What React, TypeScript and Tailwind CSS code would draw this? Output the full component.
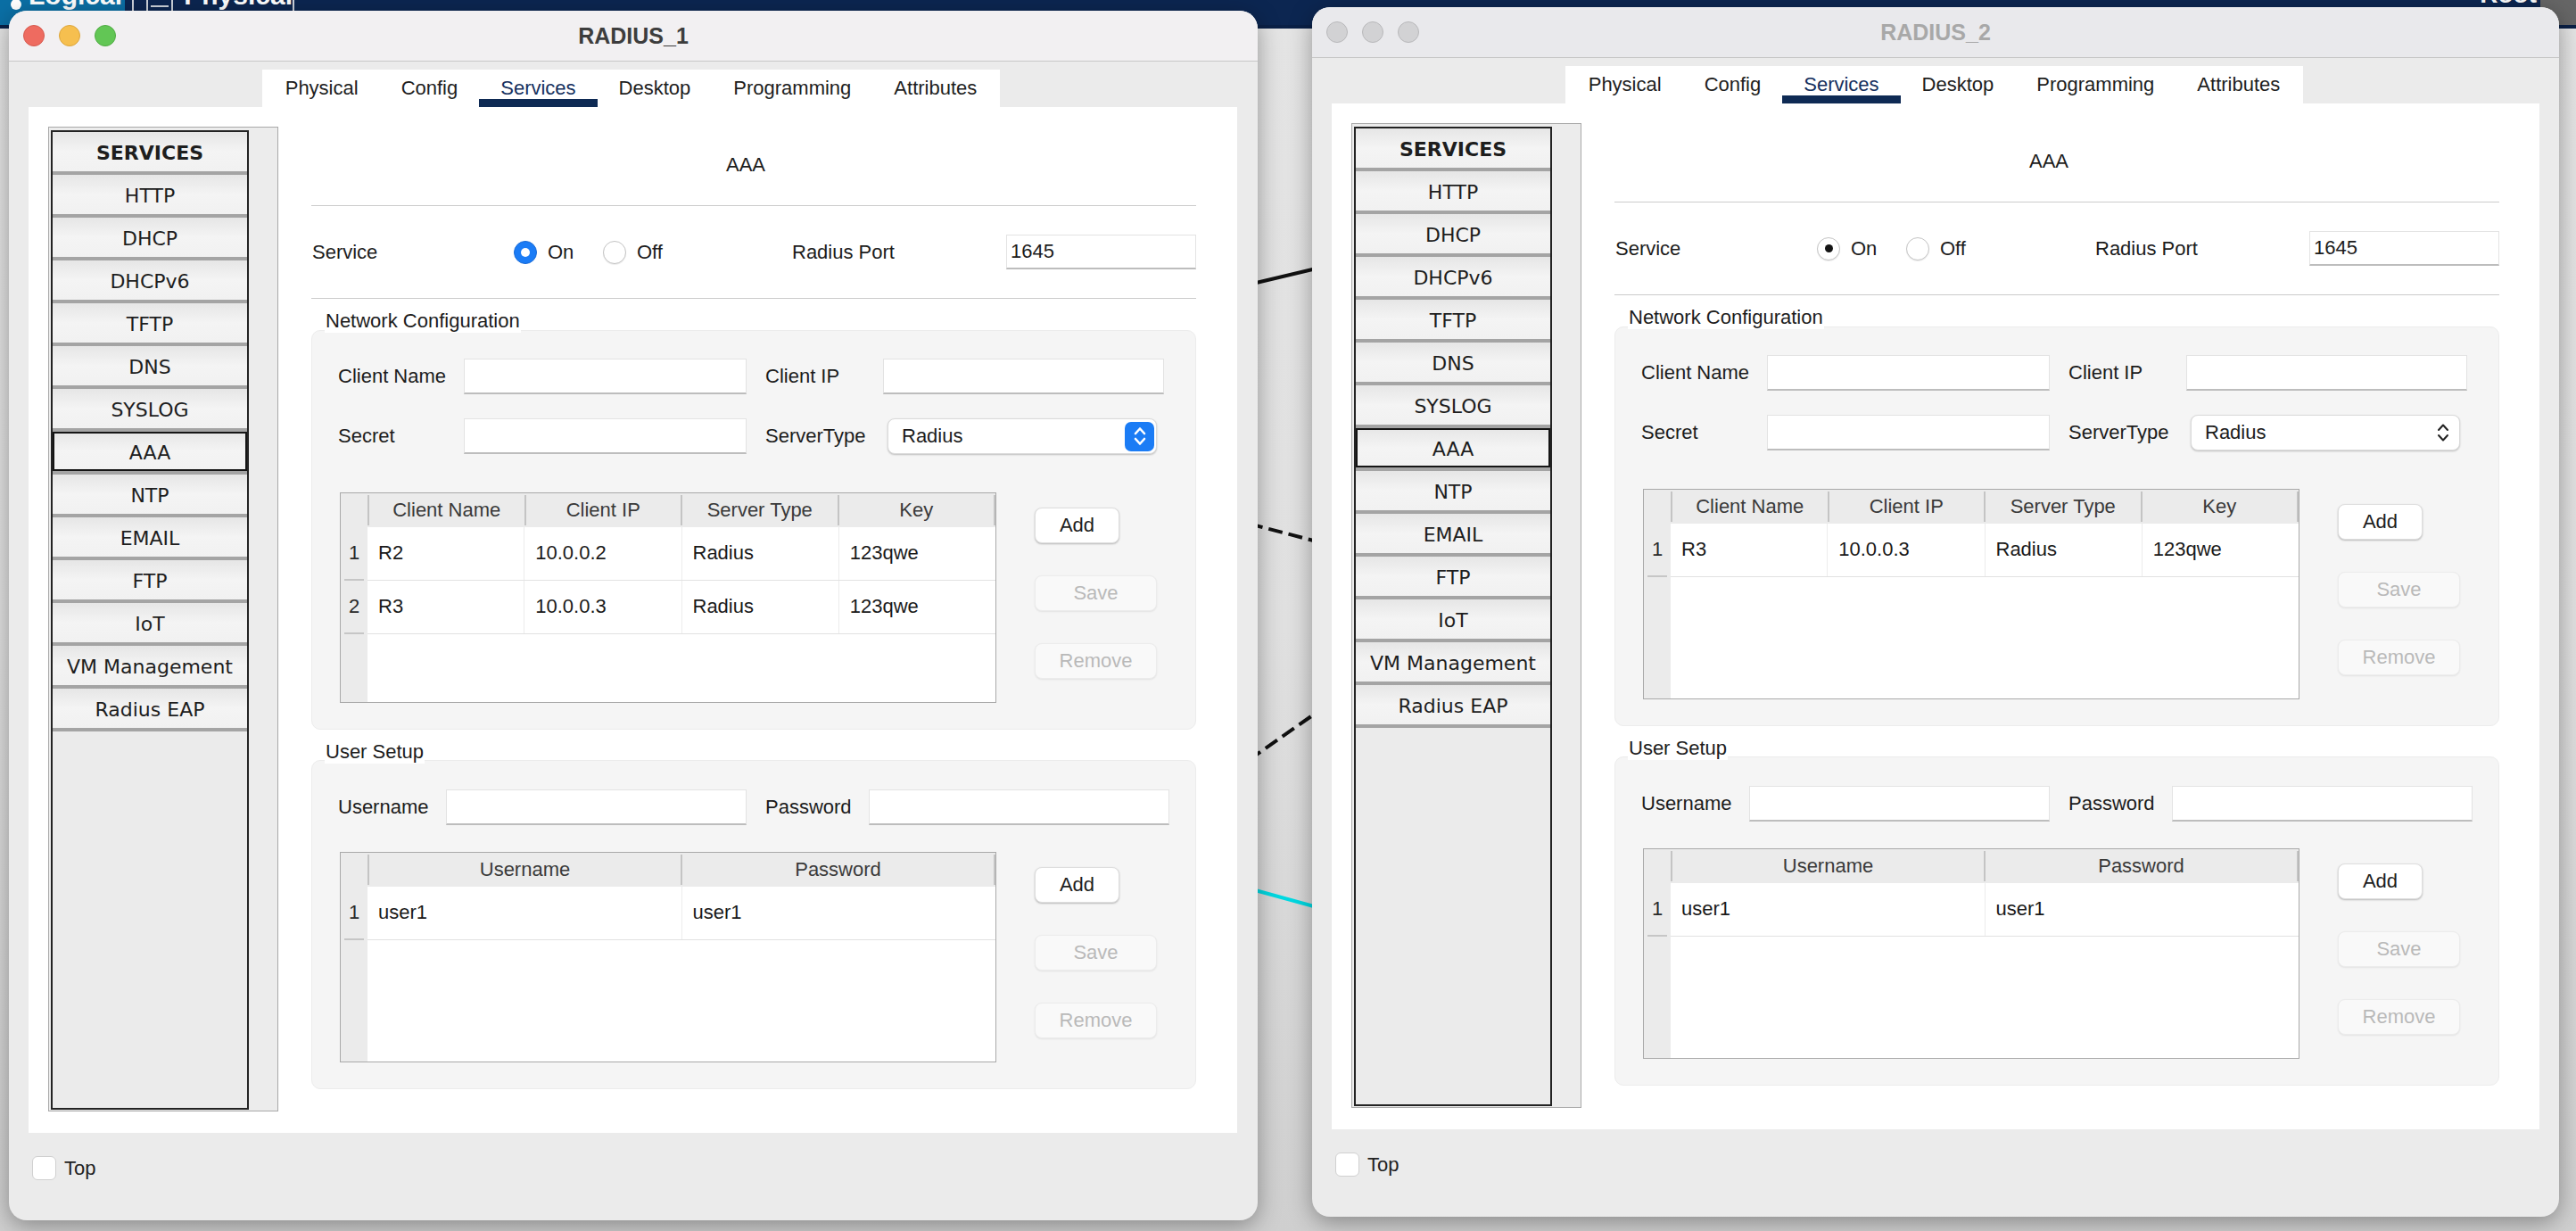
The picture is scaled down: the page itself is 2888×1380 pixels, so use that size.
import React from "react";

type Client = { name: string; ip: string; type: string; key: string };
type User = { name: string; pass: string };

const SERVICES = [
  "HTTP",
  "DHCP",
  "DHCPv6",
  "TFTP",
  "DNS",
  "SYSLOG",
  "AAA",
  "NTP",
  "EMAIL",
  "FTP",
  "IoT",
  "VM Management",
  "Radius EAP",
];

const TABS = ["Physical", "Config", "Services", "Desktop", "Programming", "Attributes"];

function Lights({ active }: { active: boolean }) {
  if (active) {
    return (
      <div className="flex gap-[16px] pl-[16px]">
        <div className="w-[24px] h-[24px] rounded-full bg-[#ee6b60] border border-[#d65a4f]" />
        <div className="w-[24px] h-[24px] rounded-full bg-[#f6bf4f] border border-[#dca53c]" />
        <div className="w-[24px] h-[24px] rounded-full bg-[#62c655] border border-[#50ab44]" />
      </div>
    );
  }
  return (
    <div className="flex gap-[16px] pl-[16px]">
      <div className="w-[24px] h-[24px] rounded-full bg-[#d2d2d4] border border-[#b9b9bb]" />
      <div className="w-[24px] h-[24px] rounded-full bg-[#d2d2d4] border border-[#b9b9bb]" />
      <div className="w-[24px] h-[24px] rounded-full bg-[#d2d2d4] border border-[#b9b9bb]" />
    </div>
  );
}

function Input({ w }: { w: string }) {
  return <div className={`${w} h-[40px] shrink-0 bg-white border border-[#e3e3e3] border-b-2 border-b-[#bdbdbd]`} />;
}

function Radio({ on, active }: { on: boolean; active: boolean }) {
  if (on && active) {
    return (
      <div className="w-[26px] h-[26px] shrink-0 rounded-full bg-[#1b7cf6] border border-[#1769d6] flex items-center justify-center">
        <div className="w-[10px] h-[10px] rounded-full bg-white" />
      </div>
    );
  }
  return (
    <div className="w-[26px] h-[26px] shrink-0 rounded-full bg-white border border-[#c4c4c4] shadow-[0_1px_1px_rgba(0,0,0,0.08)] flex items-center justify-center">
      {on ? <div className="w-[9px] h-[9px] rounded-full bg-[#141414]" /> : null}
    </div>
  );
}

function Select({ active }: { active: boolean }) {
  return (
    <div className="w-[302px] h-[40px] ml-[5px] shrink-0 rounded-[8px] bg-white border border-[#dadada] shadow-[0_1px_2px_rgba(0,0,0,0.22)] flex items-center justify-between pl-[15px] pr-[2px]">
      <span>Radius</span>
      <div
        className={
          active
            ? "w-[33px] h-[33px] rounded-[7px] bg-[#1b7cf5] flex items-center justify-center"
            : "w-[33px] h-[33px] flex items-center justify-center"
        }
      >
        <svg width="20" height="28" viewBox="0 0 20 28">
          <path
            d="M5 11 L10 5.5 L15 11 M5 17 L10 22.5 L15 17"
            fill="none"
            stroke={active ? "#ffffff" : "#222222"}
            strokeWidth={active ? 2.6 : 2}
            strokeLinecap="round"
            strokeLinejoin="round"
          />
        </svg>
      </div>
    </div>
  );
}

function Btn({ label, enabled, w, mt }: { label: string; enabled: boolean; w: string; mt: string }) {
  return (
    <div
      className={`${w} ${mt} h-[40px] rounded-[8px] flex items-center justify-center ${
        enabled
          ? "bg-white text-[#1e1e1e] border border-[#dedede] shadow-[0_1px_2px_rgba(0,0,0,0.25)]"
          : "bg-[#f9f9f9] text-[#b9b9b9] border border-[#ececec] shadow-[0_1px_2px_rgba(0,0,0,0.08)]"
      }`}
    >
      {label}
    </div>
  );
}

function Buttons() {
  return (
    <div className="ml-[43px] flex flex-col">
      <Btn label="Add" enabled w="w-[95px]" mt="mt-[17px]" />
      <Btn label="Save" enabled={false} w="w-[137px]" mt="mt-[36px]" />
      <Btn label="Remove" enabled={false} w="w-[137px]" mt="mt-[36px]" />
    </div>
  );
}

function Table({ cols, rows }: { cols: string[]; rows: string[][] }) {
  return (
    <div className="w-[736px] h-[236px] shrink-0 border border-[#a9a9a9] bg-white flex">
      <div className="w-[30px] shrink-0 bg-[#ebebeb] flex flex-col">
        <div className="h-[38px] shrink-0" />
        {rows.map((_, i) => (
          <div key={i} className="h-[60px] shrink-0 flex flex-col">
            <div className="flex-1 flex items-center justify-center text-[#2a2a2a]">{i + 1}</div>
            <div className="h-[2px] mx-[4px] bg-[#c6c6c6]" />
          </div>
        ))}
      </div>
      <div className="flex-1 flex flex-col">
        <div className="h-[38px] shrink-0 bg-[#ebebeb] flex pt-[2px] pb-[2px]">
          {cols.map((c, i) => (
            <div
              key={c}
              className={`flex-1 flex items-center justify-center text-[#3a3a3a] border-l-2 border-[#c4c4c4] ${
                i === cols.length - 1 ? "border-r-2" : ""
              }`}
            >
              {c}
            </div>
          ))}
        </div>
        {rows.map((r, i) => (
          <div key={i} className="h-[60px] shrink-0 flex border-b border-[#e2e2e2]">
            {r.map((cell, j) => (
              <div
                key={j}
                className={`flex-1 flex items-center pl-[12px] pb-[1px] text-[#1a1a1a] ${
                  j < r.length - 1 ? "border-r border-[#ececec]" : ""
                }`}
              >
                {cell}
              </div>
            ))}
          </div>
        ))}
      </div>
    </div>
  );
}

function Sidebar() {
  return (
    <div className="mt-[22px] w-[258px] h-[1104px] shrink-0 bg-[#ececec] border border-[#a9a9a9] pl-[2px] pt-[3px]">
      <div className="w-[222px] h-[1098px] border-2 border-[#232323] bg-[#ebebeb] flex flex-col font-['DejaVu_Sans',Verdana,sans-serif] text-[22px] text-[#1e1e1e]">
        <div className="h-[48px] shrink-0 pt-[3px] border-b-4 border-[#a4a4a4] bg-gradient-to-b from-[#e6e6e6] via-[#f4f4f4] to-[#f1f1f1] flex items-center justify-center font-bold">
          SERVICES
        </div>
        {SERVICES.map((s) => (
          <div
            key={s}
            className={`h-[48px] shrink-0 pt-[3px] border-b-4 border-[#a4a4a4] bg-gradient-to-b from-[#e6e6e6] via-[#f4f4f4] to-[#f1f1f1] flex items-center justify-center ${
              s === "AAA" ? "shadow-[inset_0_0_0_2px_#151515]" : ""
            }`}
          >
            {s}
          </div>
        ))}
      </div>
    </div>
  );
}

function Content({ active, clients, users }: { active: boolean; clients: Client[]; users: User[] }) {
  return (
    <div className="ml-[37px] w-[992px] shrink-0 flex flex-col">
      <div className="h-[110px] flex items-center justify-center pt-[19px] pr-[18px]">AAA</div>
      <div className="h-px bg-[#cbcbcb]" />
      <div className="h-[103px] flex items-center">
        <div className="w-[227px] pl-[1px]">Service</div>
        <Radio on active={active} />
        <div className="ml-[12px] w-[62px]">On</div>
        <Radio on={false} active={active} />
        <div className="ml-[12px] w-[174px]">Off</div>
        <div className="w-[240px]">Radius Port</div>
        <div className="w-[213px] h-[39px] bg-white border border-[#e3e3e3] border-b-2 border-b-[#bdbdbd] flex items-center pl-[4px]">
          1645
        </div>
      </div>
      <div className="h-px bg-[#cbcbcb]" />

      <div className="mt-[12px] ml-[15px] w-fit px-[1px] bg-white relative z-10 leading-[26px]">Network Configuration</div>
      <div className="-mt-[3px] h-[448px] rounded-[10px] bg-[#f5f5f5] border border-[#ececec] pt-[31px] pl-[29px]">
        <div className="h-[40px] flex items-center">
          <div className="w-[141px]">Client Name</div>
          <Input w="w-[317px]" />
          <div className="ml-[21px] w-[132px]">Client IP</div>
          <Input w="w-[315px]" />
        </div>
        <div className="mt-[27px] h-[40px] flex items-center">
          <div className="w-[141px]">Secret</div>
          <Input w="w-[317px]" />
          <div className="ml-[21px] w-[132px]">ServerType</div>
          <Select active={active} />
        </div>
        <div className="mt-[43px] ml-[2px] flex">
          <Table
            cols={["Client Name", "Client IP", "Server Type", "Key"]}
            rows={clients.map((c) => [c.name, c.ip, c.type, c.key])}
          />
          <Buttons />
        </div>
      </div>

      <div className="mt-[12px] ml-[15px] w-fit px-[1px] bg-white relative z-10 leading-[26px]">User Setup</div>
      <div className="-mt-[4px] h-[369px] rounded-[10px] bg-[#f5f5f5] border border-[#ececec] pt-[32px] pl-[29px]">
        <div className="h-[40px] flex items-center">
          <div className="w-[121px]">Username</div>
          <Input w="w-[337px]" />
          <div className="ml-[21px] w-[116px]">Password</div>
          <Input w="w-[337px]" />
        </div>
        <div className="mt-[30px] ml-[2px] flex">
          <Table cols={["Username", "Password"]} rows={users.map((u) => [u.name, u.pass])} />
          <Buttons />
        </div>
      </div>
    </div>
  );
}

function Window({
  pos,
  active,
  title,
  clients,
  users,
  panelW,
}: {
  pos: string;
  active: boolean;
  title: string;
  clients: Client[];
  users: User[];
  panelW: string;
}) {
  return (
    <div
      className={`absolute ${pos} h-[1356px] rounded-[20px] overflow-hidden bg-[#ebebeb] shadow-[0_6px_26px_rgba(0,0,0,0.35)] flex flex-col font-['Liberation_Sans',Arial,Helvetica,sans-serif] text-[22px] leading-[26px] text-[#1c1c1c]`}
    >
      <div
        className={`h-[57px] shrink-0 border-b border-[#c7c7c7] grid grid-cols-[1fr_auto_1fr] items-center ${
          active ? "bg-[#f2f0f2]" : "bg-[#e9e9ec]"
        }`}
      >
        <Lights active={active} />
        <div className={`text-[25px] font-bold ${active ? "text-[#3d3d3d]" : "text-[#a8a8a8]"}`}>{title}</div>
        <div />
      </div>
      <div className="ml-[284px] mt-[9px] w-[827px] h-[42px] shrink-0 bg-white flex justify-center">
        {TABS.map((t) => (
          <div
            key={t}
            className={`h-full px-[24px] flex items-center pt-[9px] border-b-[9px] ${
              t === "Services" ? "border-[#0e2a54] text-[#15305e]" : "border-transparent text-[#1e1e1e]"
            }`}
          >
            {t}
          </div>
        ))}
      </div>
      <div className={`ml-[22px] ${panelW} h-[1150px] shrink-0 bg-white flex pl-[22px]`}>
        <Sidebar />
        <Content active={active} clients={clients} users={users} />
      </div>
      <div className="mt-[26px] ml-[26px] flex items-center gap-[9px]">
        <div className="w-[27px] h-[27px] rounded-[6px] bg-white border border-[#d0d0d0]" />
        <span className="text-[#222]">Top</span>
      </div>
    </div>
  );
}

export default function App() {
  const users: User[] = [{ name: "user1", pass: "user1" }];
  return (
    <div className="relative w-[2888px] h-[1380px] overflow-hidden bg-[#e2e2e2] flex flex-col font-['Liberation_Sans',Arial,sans-serif]">
      <div className="h-[32px] shrink-0 bg-[#0c2651] border-b-4 border-[#0a2046] flex">
        <div className="w-[140px] h-full bg-[#0b6fa5] flex items-start pl-[12px] gap-[8px] overflow-hidden">
          <div className="w-[12px] h-[12px] rounded-full bg-white -mt-[1px]" />
          <span className="text-white font-bold text-[30px] leading-[30px] -mt-[20px]">Logical</span>
        </div>
        <div className="ml-[8px] w-[182px] h-[28px] border-2 border-t-0 border-white/80 rounded-b-[10px] flex items-start overflow-hidden">
          <div className="ml-[14px] w-[36px] h-[14px] border-2 border-t-0 border-white/80 flex items-end justify-center">
            <div className="w-[20px] h-[2px] bg-white/80 mb-[4px]" />
          </div>
          <span className="ml-[12px] text-white font-bold text-[30px] leading-[30px] -mt-[20px]">Physical</span>
        </div>
        <div className="flex-1" />
        <span className="text-white font-bold text-[28px] leading-[28px] -mt-[20px] mr-[4px]">Root</span>
        <div className="w-[40px] h-[28px] bg-[#666666]" />
      </div>
      <div className="flex-1 bg-gradient-to-b from-[#e4e4e4] via-[#e0e0e0] to-[#cfcfcf]" />

      <svg className="absolute left-0 top-0" width="2888" height="1380" viewBox="0 0 2888 1380">
        <line x1="1400" y1="319" x2="1480" y2="300" stroke="#111" strokeWidth="4" />
        <line x1="1400" y1="587" x2="1480" y2="608" stroke="#111" strokeWidth="4" strokeDasharray="16 7" />
        <line x1="1400" y1="852" x2="1480" y2="796" stroke="#111" strokeWidth="4" strokeDasharray="16 7" />
        <line x1="1400" y1="996" x2="1480" y2="1018" stroke="#00d9e2" strokeWidth="4" />
      </svg>

      <Window
        pos="left-[10px] top-[12px] w-[1400px]"
        panelW="w-[1355px]"
        active
        title="RADIUS_1"
        clients={[
          { name: "R2", ip: "10.0.0.2", type: "Radius", key: "123qwe" },
          { name: "R3", ip: "10.0.0.3", type: "Radius", key: "123qwe" },
        ]}
        users={users}
      />
      <Window
        pos="left-[1471px] top-[8px] w-[1398px]"
        panelW="w-[1354px]"
        active={false}
        title="RADIUS_2"
        clients={[{ name: "R3", ip: "10.0.0.3", type: "Radius", key: "123qwe" }]}
        users={users}
      />
    </div>
  );
}
